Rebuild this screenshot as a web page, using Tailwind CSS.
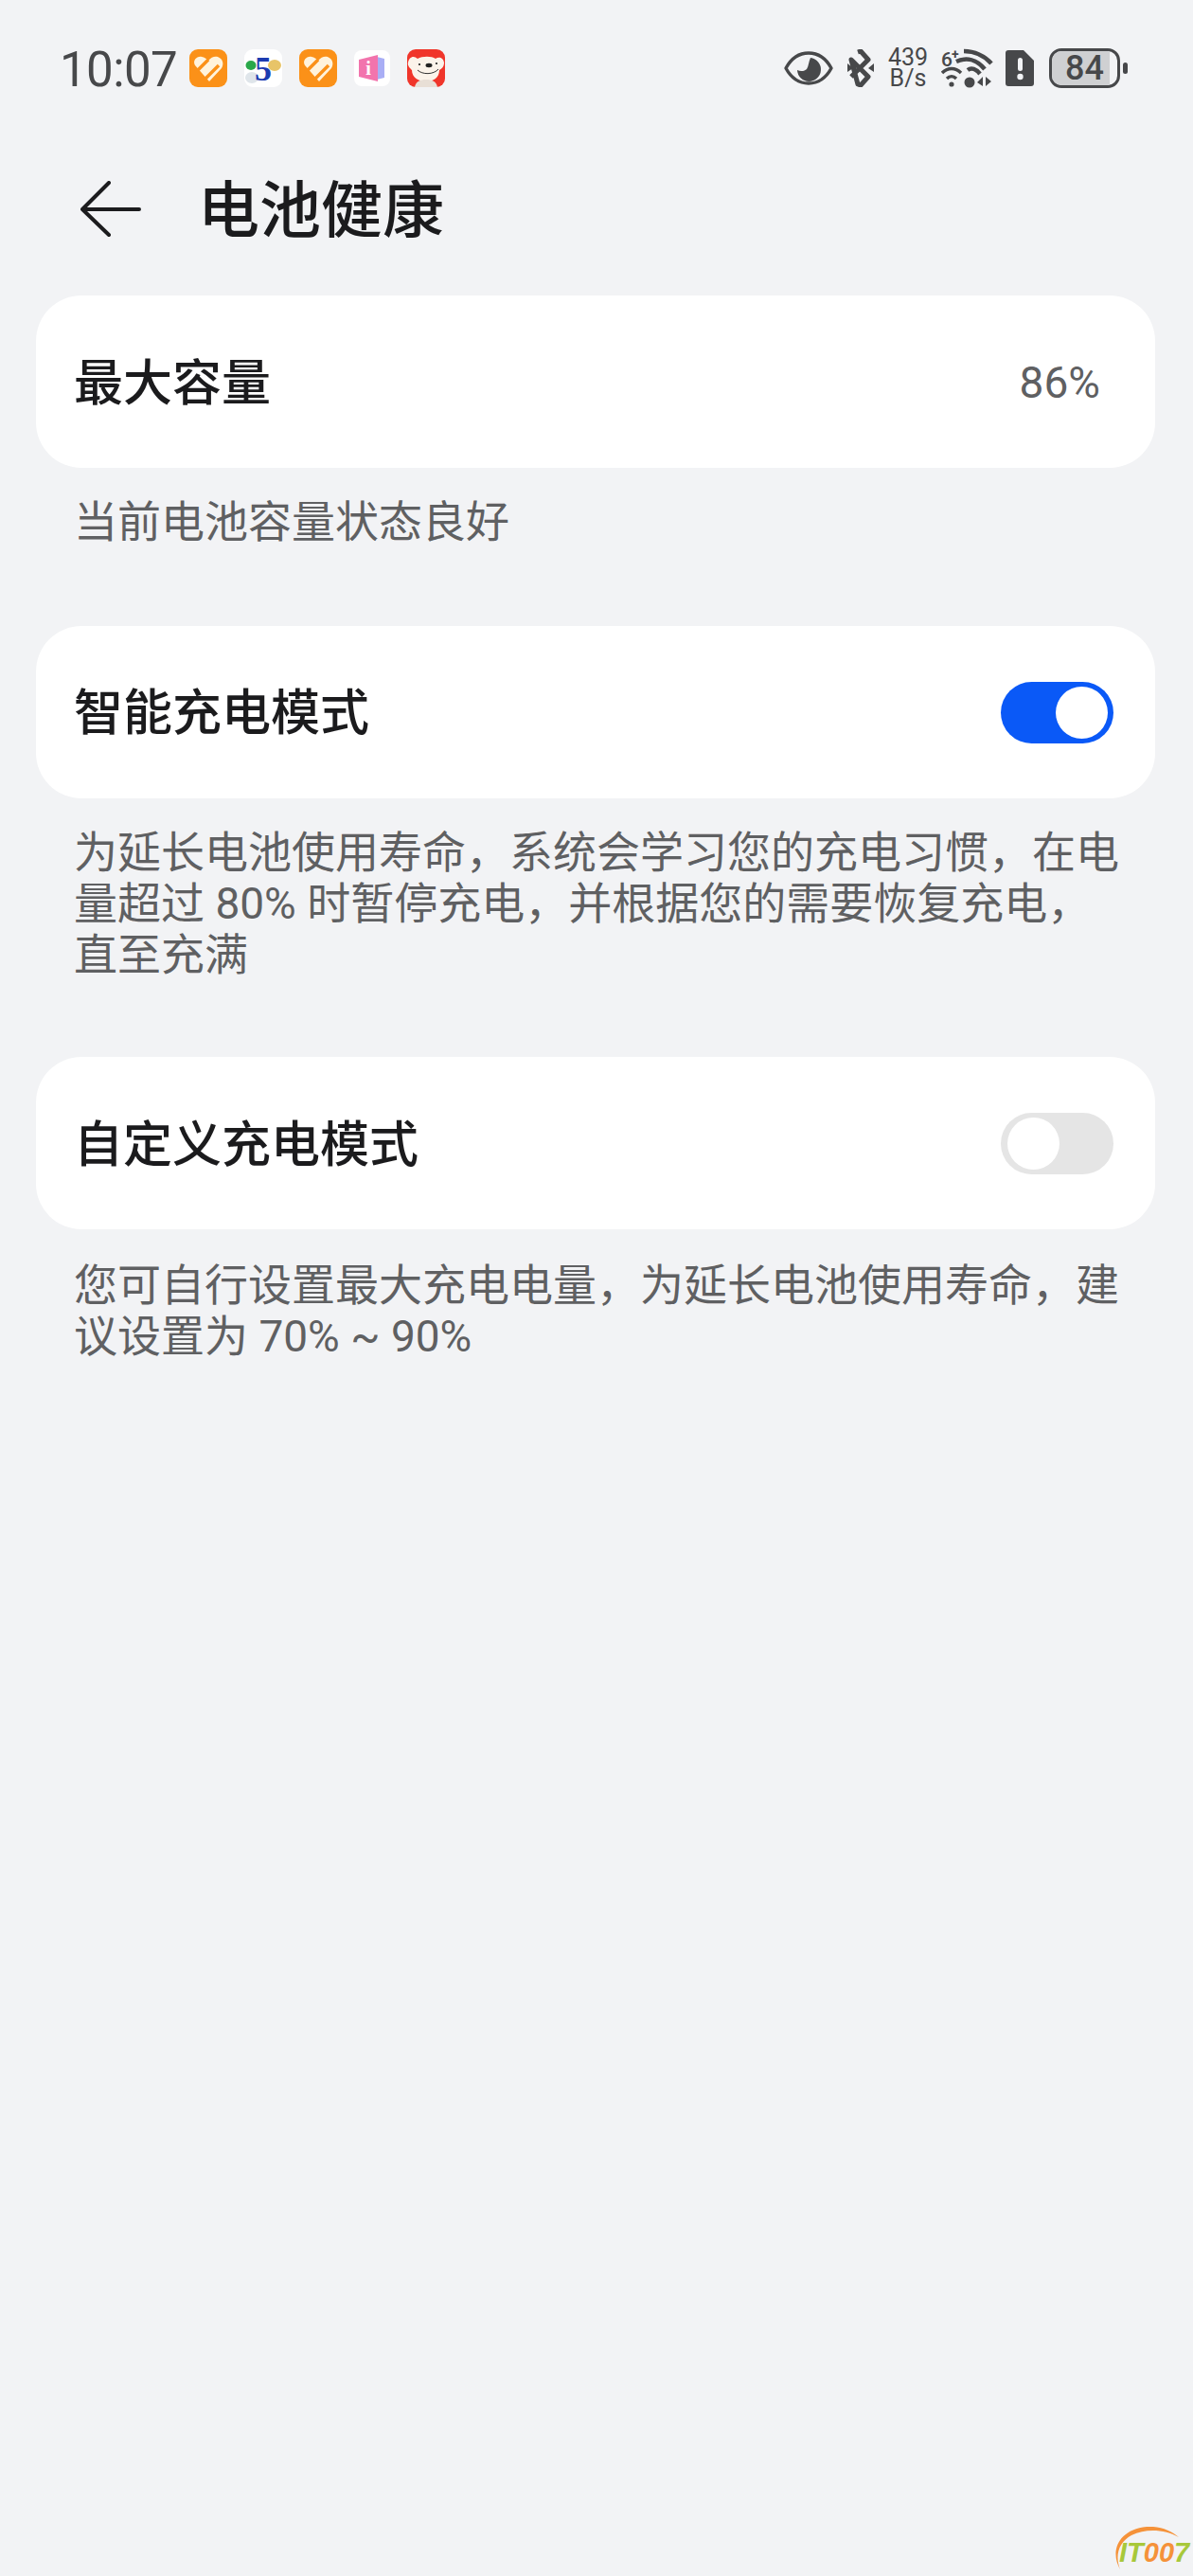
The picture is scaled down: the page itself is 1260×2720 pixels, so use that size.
<!DOCTYPE html>
<html lang="zh-CN">
  <head>
    <meta charset="UTF-8" />
    <meta name="viewport" content="width=device-width, initial-scale=1.0" />
    <title>电池健康</title>
    <script src="https://cdn.jsdelivr.net/npm/@tailwindcss/browser@4"></script>
  </head>
  <body class="relative w-[1260px] h-[2720px] overflow-hidden bg-[#f2f3f5] font-['Roboto','Noto_Sans_CJK_SC',sans-serif]">
    <!-- status bar -->
    <div class="h-[144px] pl-[63px] pt-[50px] flex items-start text-[#47484a]">
      <span class="w-[137px] h-[44px] pt-[2px] text-[51px] leading-[44px] tracking-[-0.6px]">10:07</span>

      <div class="flex items-center h-[44px] gap-[18px]">
        <svg class="w-[40px] h-[40px]" viewBox="0 0 40 40">
          <rect width="40" height="40" rx="9" fill="#fb9118" />
          <path d="M6 17 C3 12 8 7 13 8 C16 8.500 18 10 20 12 C23 8 27 7 30 8 C35 10 37 15 34 20 L21 34 Z" fill="#fff3dc" />
          <path d="M7 24 L20 11 M15 33 L31 17" fill="none" stroke="#fb9118" stroke-width="3.500" />
        </svg>
        <svg class="w-[40px] h-[40px]" viewBox="0 0 40 40">
          <rect width="40" height="40" rx="9" fill="#fff" />
          <ellipse cx="7" cy="17" rx="5.500" ry="5" fill="#2aa84a" />
          <ellipse cx="32" cy="17" rx="7" ry="6" fill="#e8c468" />
          <ellipse cx="8" cy="30" rx="7" ry="6" fill="#dfe5ea" />
          <text x="20" y="33" text-anchor="middle" font-family="Liberation Serif" font-weight="700" font-size="36" fill="#1c3bb0">5</text>
        </svg>
        <svg class="w-[40px] h-[40px]" viewBox="0 0 40 40">
          <rect width="40" height="40" rx="9" fill="#fb9118" />
          <path d="M6 17 C3 12 8 7 13 8 C16 8.500 18 10 20 12 C23 8 27 7 30 8 C35 10 37 15 34 20 L21 34 Z" fill="#fff3dc" />
          <path d="M7 24 L20 11 M15 33 L31 17" fill="none" stroke="#fb9118" stroke-width="3.500" />
        </svg>
        <svg class="w-[38px] h-[38px]" viewBox="0 0 38 38">
          <rect width="38" height="38" rx="8" fill="#fff" />
          <path d="M24 7 L32 9 L32 29 L24 31 Z" fill="#a9aef5" />
          <path d="M5 10 L25 5 L25 33 L5 28 Z" fill="#f274ad" />
          <text x="15" y="26" text-anchor="middle" font-family="Liberation Serif" font-weight="700" font-size="20" fill="#fff">i</text>
        </svg>
        <svg class="w-[40px] h-[40px]" viewBox="0 0 40 40">
          <rect width="40" height="40" rx="9" fill="#f0352a" />
          <path d="M1 14 C2 8 7 6 11 10 C16 7 26 7 30 10 C33 8 38 8 39 14 C39 19 36 21 34 22 C34 30 28 34 20 34 C12 34 5 30 5 22 C3 20 0 17 1 14 Z" fill="#fbf3ea" />
          <path d="M8 40 C9 34 14 32 20 32 C26 32 31 34 32 40 Z" fill="#e8dfd6" />
          <ellipse cx="23" cy="17" rx="3.500" ry="2.200" fill="#222" />
          <circle cx="13" cy="16" r="1.100" fill="#222" />
          <circle cx="31" cy="15" r="1.100" fill="#222" />
          <path d="M11 22 C16 27 28 27 33 21" fill="none" stroke="#333" stroke-width="1" />
        </svg>
      </div>

      <!-- system icons on the right -->
      <div class="ml-[358px] flex items-center h-[44px]">
        <svg class="w-[52px] h-[36px]" viewBox="0 0 52 36">
          <path d="M2 18 C8 7 16 2 26 2 C36 2 44 7 50 18 C44 29 36 34 26 34 C16 34 8 29 2 18 Z" fill="none" stroke="#47484a" stroke-width="3.400" stroke-linejoin="round" />
          <path d="M28 7 A12.500 12.500 0 1 1 14 20 C18 22 22 21 24 19 C26 16 26 11 28 7 Z" fill="#47484a" />
        </svg>

        <svg class="ml-[15px] w-[28px] h-[40px]" viewBox="0 0 28 40">
          <path d="M11 3 L14 2 L22 11 L4 29 M4 11 L22 29 L14 38 L11 37 Z" fill="none" stroke="#47484a" stroke-width="5" stroke-linejoin="round" />
          <path d="M0 15 L6 20 L0 24 Z M28 15 L22 20 L28 24 Z" fill="#47484a" />
        </svg>

        <div class="ml-[13px] w-[46px] flex flex-col items-center text-[25px] leading-[22px]">
          <span>439</span>
          <span>B/s</span>
        </div>

        <svg class="ml-[12px] w-[56px] h-[44px]" viewBox="0 0 56 44">
          <text x="0" y="20" font-family="Roboto" font-weight="500" font-size="21" fill="#47484a">6</text>
          <text x="11" y="12" font-family="Roboto" font-weight="700" font-size="14" fill="#47484a">+</text>
          <path d="M24 4 C35 4 46 9 53 17" fill="none" stroke="#47484a" stroke-width="4.500" />
          <path d="M16 15 C27 10 38 13 46 23" fill="none" stroke="#47484a" stroke-width="4.500" />
          <path d="M28 24 C32 21 37 23 41 28" fill="none" stroke="#47484a" stroke-width="4.500" />
          <path d="M1 27 C7 21 15 21 21 27" fill="none" stroke="#47484a" stroke-width="3.400" />
          <path d="M6 33 C9 30 13 30 16 33" fill="none" stroke="#47484a" stroke-width="3.400" />
          <circle cx="11" cy="39" r="2.600" fill="#47484a" />
          <circle cx="30" cy="37" r="5.500" fill="#47484a" />
          <path d="M44 31 L44 41 L38 37 Z M47 31 L47 41 L53 36 Z" fill="#47484a" />
        </svg>

        <svg class="ml-[12px] w-[30px] h-[38px]" viewBox="0 0 30 38">
          <path d="M3 0 L19 0 L30 11 L30 35 A3 3 0 0 1 27 38 L3 38 A3 3 0 0 1 0 35 L0 3 A3 3 0 0 1 3 0 Z" fill="#47484a" />
          <rect x="13" y="8" width="5" height="14" rx="2.500" fill="#f2f3f5" />
          <circle cx="15.500" cy="28" r="3.200" fill="#f2f3f5" />
        </svg>

        <div class="ml-[16px] relative w-[75px] h-[42px] rounded-[13px] border-[3px] border-[#47484a] overflow-hidden">
          <div class="h-full w-[61px] bg-[#cfd0d2]"></div>
          <span class="absolute inset-0 flex items-center justify-center text-[36px] font-medium leading-none">84</span>
        </div>
        <div class="ml-[3px] w-[5px] h-[12px] rounded-full bg-[#47484a]"></div>
      </div>
    </div>

    <!-- title row -->
    <div class="h-[168px] pb-[14px] pl-[85px] flex items-center">
      <svg class="w-[64px] h-[60px]" viewBox="0 0 64 60">
        <path d="M30 2 L2 30 L30 57 M2 30 L62 30" fill="none" stroke="#1c1c1e" stroke-width="4" stroke-linecap="round" stroke-linejoin="round" />
      </svg>
      <h1 class="ml-[60px] mt-[5px] text-[65px] font-medium text-[#1b1b1d] leading-none whitespace-nowrap">电池健康</h1>
    </div>

    <div class="pl-[38px] pr-[40px]">
      <!-- capacity -->
      <div class="h-[182px] rounded-[48px] bg-white pl-[40px] pr-[58px] flex items-center justify-between">
        <span class="mt-[5px] text-[52px] font-medium text-[#1b1b1d]">最大容量</span>
        <span class="mt-[3px] text-[46px] text-[#5f6062]">86%</span>
      </div>
      <p class="mt-[30px] pl-[40px] whitespace-nowrap text-[46px] leading-[54px] text-[#5f6062]">当前电池容量状态良好</p>

      <!-- smart charging -->
      <div class="mt-[83px] h-[182px] rounded-[48px] bg-white pl-[40px] pr-[44px] flex items-center justify-between">
        <span class="mt-[4px] text-[52px] font-medium text-[#1b1b1d]">智能充电模式</span>
        <div class="w-[119px] h-[65px] rounded-full bg-[#0a59f7] flex items-center justify-end pr-[6px]">
          <div class="w-[55px] h-[55px] rounded-full bg-white"></div>
        </div>
      </div>
      <p class="mt-[30px] pl-[40px] whitespace-nowrap text-[46px] leading-[54px] text-[#5f6062]">
        为延长电池使用寿命，系统会学习您的充电习惯，在电<br />量超过 80% 时暂停充电，并根据您的需要恢复充电，<br />直至充满
      </p>

      <!-- custom charging -->
      <div class="mt-[81px] h-[182px] rounded-[48px] bg-white pl-[40px] pr-[44px] flex items-center justify-between">
        <span class="mt-[5px] text-[52px] font-medium text-[#1b1b1d]">自定义充电模式</span>
        <div class="w-[119px] h-[65px] rounded-full bg-[#e5e5e5] flex items-center pl-[7px]">
          <div class="w-[55px] h-[55px] rounded-full bg-white"></div>
        </div>
      </div>
      <p class="mt-[32px] pl-[40px] whitespace-nowrap text-[46px] leading-[54px] text-[#5f6062]">
        您可自行设置最大充电电量，为延长电池使用寿命，建<br />议设置为 70% ~ 90%
      </p>
    </div>

    <!-- site mark in the corner -->
    <div class="absolute right-[3px] bottom-[6px] w-[82px] h-[46px]">
      <svg class="absolute left-0 top-0 w-[82px] h-[46px]" viewBox="0 0 82 46">
        <path d="M8 45 C-3 26 6 3 36 0 C50 -1 62 4 70 11 C56 3 36 1 20 9 C7 16 2 30 8 45 Z" fill="#f5923a" />
      </svg>
      <span class="absolute left-[7px] top-[7px] text-[29px] leading-[40px] font-bold italic font-['Liberation_Sans',sans-serif] whitespace-nowrap"><span class="text-[#a8c83a]">IT</span><span class="text-[#f5923a]">00</span><span class="text-[#a8c83a]">7</span></span>
    </div>
  </body>
</html>
